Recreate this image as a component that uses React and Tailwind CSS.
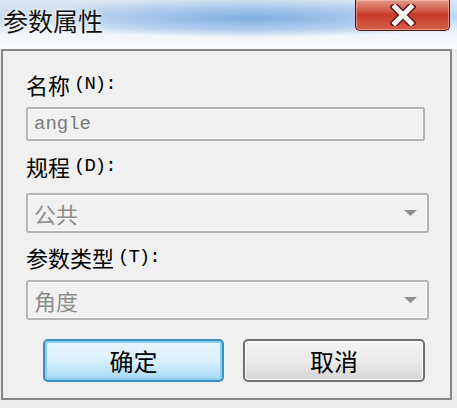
import React from 'react'

const cjk = { fontFamily: '"Noto Sans CJK SC", "Noto Sans", sans-serif' }

const Arrow = () => (
    <svg width="15" height="8" viewBox="0 0 15 8" className="shrink-0">
        <path d="M1 1h13l-6.5 6z" fill="#8c8c8c" />
    </svg>
)

const Label = ({ text, hot, className }) => (
    <div className={`h-[32px] flex items-center text-[22px] text-black leading-none ${className}`}>
        <span>{text}</span>
        <span className="ml-[4px] text-[19px] font-['Liberation_Mono'] tracking-[-1px]">({hot}):</span>
    </div>
)

const Select = ({ value, className }) => (
    <div className={`h-[40px] w-[403px] flex items-center justify-between pl-[6px] pr-[9px] rounded-[3px] border-2 border-[#b4b4b4] bg-[#f1f1f1] shadow-[inset_0_0_0_1px_#fbfbfb] ${className}`}>
        <span className="text-[22px] text-[#8d8d8d] leading-none">{value}</span>
        <Arrow />
    </div>
)

const CloseButton = () => (
    <div className="w-[95px] h-[31px] rounded-b-[5px] border border-t-0 border-[#4a1410] bg-gradient-to-b from-[#e59a8b] via-[#c7392b] to-[#d55f48] shadow-[inset_0_0_0_1px_rgba(255,200,190,0.5)] flex items-center justify-center">
        <svg width="26" height="22" viewBox="0 0 26 22">
            <path d="M5 3l16 16M21 3L5 19" stroke="#5a1d17" strokeWidth="8" strokeLinecap="square" />
            <path d="M5 3l16 16M21 3L5 19" stroke="#f4f4f4" strokeWidth="5" strokeLinecap="square" />
        </svg>
    </div>
)

export default function App() {
    return (
        <div className="w-[457px] h-[408px] bg-[#ececec] overflow-hidden" style={cjk}>
            <div className="h-[49px] flex justify-between bg-[radial-gradient(ellipse_220px_20px_at_250px_18px,#80ade0,#a9c8ec_50%,transparent_100%),linear-gradient(to_bottom,#dce7f3,#c4d9ef_35%,#f2f6fa_72%,#fafafa)]">
                <div className="pl-[3px] pt-[5px] text-[25px] leading-[30px] text-[#111] [text-shadow:0_0_6px_#ffffff,0_0_3px_#ffffff]">参数属性</div>
                <div className="pr-[7px]">
                    <CloseButton />
                </div>
            </div>
            <div className="ml-[1px] w-[451px] h-[351px] border-2 border-[#868686] bg-[#f0f0f0] pl-[23px] flex flex-col">
                <Label text="名称" hot="N" className="mt-[17px]" />
                <div className="mt-[7px] h-[34px] w-[399px] flex items-center pl-[6px] rounded-[2px] border-2 border-[#b4b4b4] bg-[#f1f1f1] shadow-[inset_0_0_0_1px_#fbfbfb]">
                    <span className="text-[19px] font-['Liberation_Mono'] text-[#7a7a7a] leading-none">angle</span>
                </div>
                <Label text="规程" hot="D" className="mt-[9px]" />
                <Select value="公共" className="mt-[11px]" />
                <Label text="参数类型" hot="T" className="mt-[8px]" />
                <Select value="角度" className="mt-[7px]" />
                <div className="mt-[19px] flex gap-[19px] pl-[17px]">
                    <button className="w-[181px] h-[43px] rounded-[5px] border-2 border-[#3c8fbf] bg-gradient-to-b from-[#eaf6fd] via-[#d9f0fc] to-[#a7d9f5] shadow-[inset_0_0_0_2px_#86d0ee] text-[24px] text-black leading-none">确定</button>
                    <button className="w-[182px] h-[43px] rounded-[5px] border-2 border-[#707070] bg-gradient-to-b from-[#f4f4f4] via-[#ebebeb] to-[#d6d6d6] shadow-[inset_0_0_0_1px_#fbfbfb] text-[24px] text-black leading-none">取消</button>
                </div>
            </div>
        </div>
    )
}
